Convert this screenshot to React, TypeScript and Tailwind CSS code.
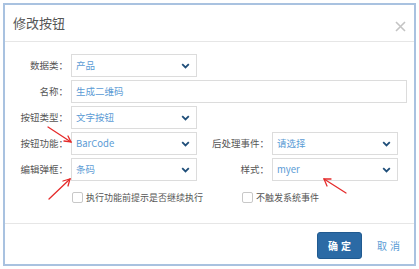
import React from "react";

const Chevron = () => (
  <svg width="9" height="6" viewBox="0 0 9 6" className="shrink-0">
    <path d="M1.2 1.2 L4.5 4.4 L7.8 1.2" fill="none" stroke="#1f4e79" strokeWidth="1.8" />
  </svg>
);

const Select = ({ value, w = "w-[126px]" }: { value: string; w?: string }) => (
  <div className={`${w} h-[23px] border border-[#dcdcdc] bg-white flex items-center justify-between pl-[4px] pr-[6px]`}>
    <span className="text-[9.5px] text-[#5b9bd5]">{value}</span>
    <Chevron />
  </div>
);

const Label = ({ children, w }: { children: React.ReactNode; w: string }) => (
  <div className={`${w} shrink-0 text-right text-[9.5px] text-[#555] pr-[3px]`}>{children}</div>
);

const Check = ({ text }: { text: string }) => (
  <div className="flex items-center gap-[3px]">
    <div className="w-[11px] h-[11px] border border-[#c8c8c8] rounded-[2px] bg-white" />
    <span className="text-[9px] text-[#555]">{text}</span>
  </div>
);

export default function App() {
  return (
    <div
      className="relative w-[419px] h-[269px] bg-white p-[3px]"
      style={{ fontFamily: '"Noto Sans CJK SC", "Noto Sans", sans-serif' }}
    >
      <div className="h-full border-2 border-[#a9c2e0] flex flex-col bg-white">
        <div className="h-[37px] shrink-0 border-b border-[#e6e6e6] flex items-center justify-between pl-[8px] pr-[8px]">
          <span className="text-[13px] text-[#555] mt-[-1px]">修改按钮</span>
          <svg width="11" height="11" viewBox="0 0 11 11" className="mt-[6px]">
            <path d="M1 1 L10 10 M10 1 L1 10" stroke="#c4c4c4" strokeWidth="1.6" />
          </svg>
        </div>
        <div className="flex-1 flex flex-col pt-[12px] gap-[3px]">
          <div className="flex items-center">
            <Label w="w-[66px]">数据类：</Label>
            <Select value="产品" />
          </div>
          <div className="flex items-center">
            <Label w="w-[66px]">名称：</Label>
            <div className="w-[336px] h-[23px] border border-[#dcdcdc] flex items-center pl-[4px]">
              <span className="text-[9.5px] text-[#5b9bd5]">生成二维码</span>
            </div>
          </div>
          <div className="flex items-center">
            <Label w="w-[66px]">按钮类型：</Label>
            <Select value="文字按钮" />
          </div>
          <div className="flex items-center">
            <Label w="w-[66px]">按钮功能：</Label>
            <Select value="BarCode" />
            <Label w="w-[75px]">后处理事件：</Label>
            <Select value="请选择" />
          </div>
          <div className="flex items-center">
            <Label w="w-[66px]">编辑弹框：</Label>
            <Select value="条码" />
            <Label w="w-[75px]">样式：</Label>
            <Select value="myer" />
          </div>
          <div className="flex items-center mt-[7px]">
            <div className="w-[67px]" />
            <div className="w-[170px]">
              <Check text="执行功能前提示是否继续执行" />
            </div>
            <Check text="不触发系统事件" />
          </div>
        </div>
        <div className="h-[41px] shrink-0 border-t border-[#e6e6e6] flex items-center justify-end pr-[11px] gap-[15px]">
          <button className="w-[45px] h-[27px] mt-[3px] bg-[#2b6aa5] border border-[#205a90] rounded-[3px] text-white text-[10px] font-bold tracking-[3px] pl-[3px]">
            确定
          </button>
          <span className="text-[10px] text-[#5b9bd5] tracking-[3px] mt-[3px]">取消</span>
        </div>
      </div>
      <svg className="absolute inset-0 pointer-events-none" width="419" height="269">
        <g stroke="#e52b2b" strokeWidth="1.3" fill="none" strokeLinecap="round">
          <path d="M48 127 L71 142" />
          <path d="M64 141 L71 142 L68 136" />
          <path d="M49 199 L70 179" />
          <path d="M63 181 L70 179 L68 186" />
          <path d="M346 193 L324 179" />
          <path d="M327 186 L324 179 L331 179" />
        </g>
      </svg>
    </div>
  );
}
